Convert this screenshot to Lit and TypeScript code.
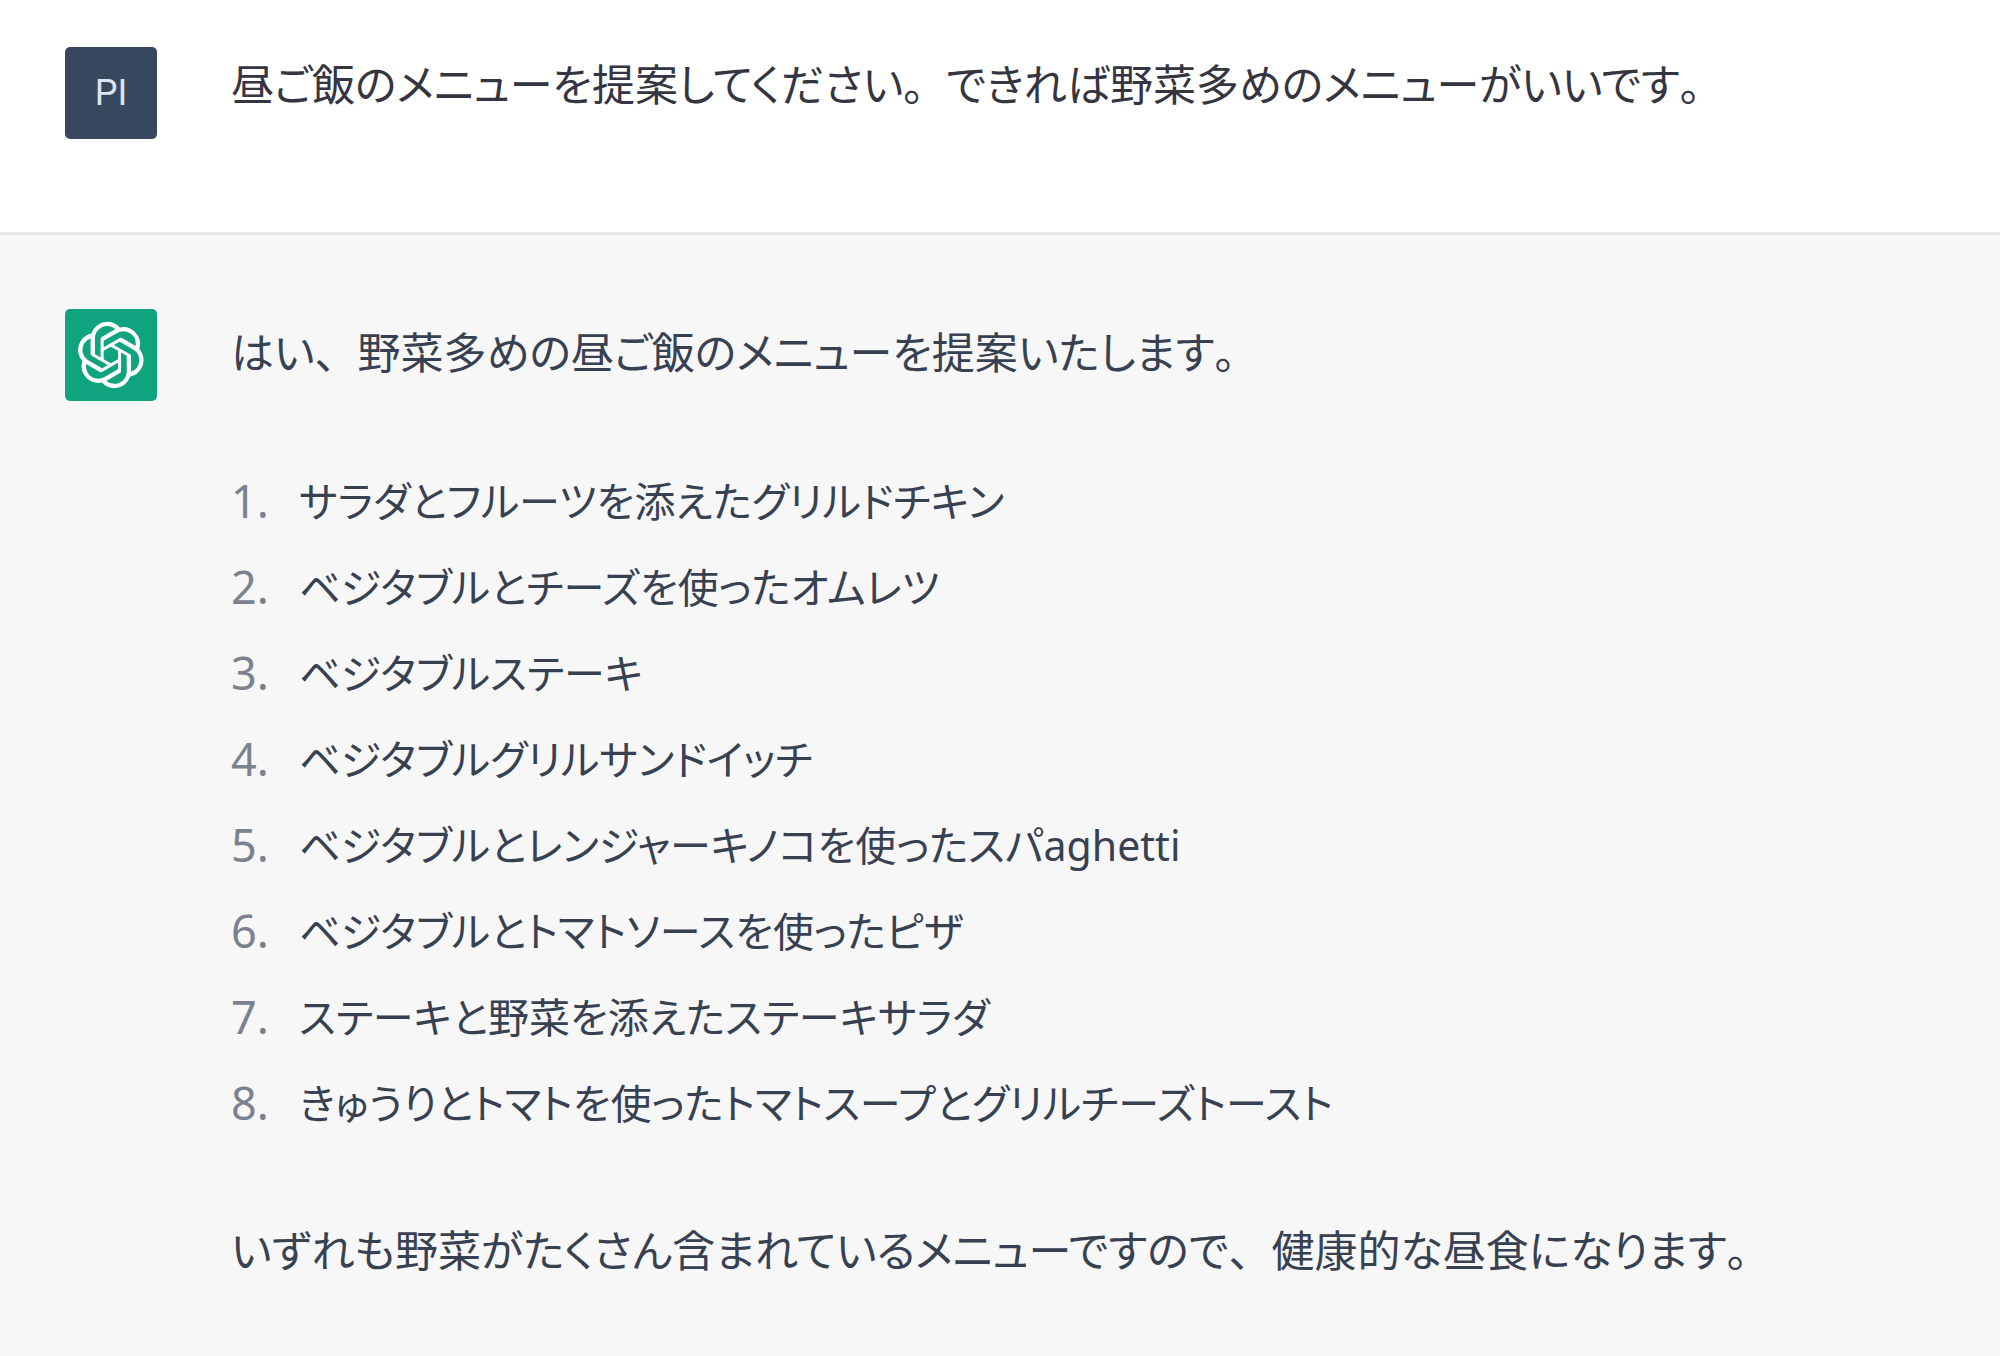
import { LitElement, html, css, svg } from "lit";
import { customElement } from "lit/decorators.js";

const MENU = [
  "サラダとフルーツを添えたグリルドチキン",
  "ベジタブルとチーズを使ったオムレツ",
  "ベジタブルステーキ",
  "ベジタブルグリルサンドイッチ",
  "ベジタブルとレンジャーキノコを使ったスパaghetti",
  "ベジタブルとトマトソースを使ったピザ",
  "ステーキと野菜を添えたステーキサラダ",
  "きゅうりとトマトを使ったトマトスープとグリルチーズトースト",
];

const knot = svg`<path fill="currentColor" d="M37.532 16.87a9.963 9.963 0 0 0-.856-8.184 10.078 10.078 0 0 0-10.855-4.835A9.964 9.964 0 0 0 18.306.5a10.079 10.079 0 0 0-9.614 6.977 9.967 9.967 0 0 0-6.664 4.834 10.08 10.08 0 0 0 1.24 11.817 9.965 9.965 0 0 0 .856 8.185 10.079 10.079 0 0 0 10.855 4.835 9.965 9.965 0 0 0 7.516 3.35 10.078 10.078 0 0 0 9.617-6.981 9.967 9.967 0 0 0 6.663-4.834 10.079 10.079 0 0 0-1.243-11.813zM22.498 37.886a7.474 7.474 0 0 1-4.799-1.735c.061-.033.168-.091.237-.134l7.964-4.6a1.294 1.294 0 0 0 .655-1.134V19.054l3.366 1.944a.12.12 0 0 1 .066.092v9.299a7.505 7.505 0 0 1-7.49 7.496zM6.392 31.006a7.471 7.471 0 0 1-.894-5.023c.06.036.162.099.237.141l7.964 4.6a1.297 1.297 0 0 0 1.308 0l9.724-5.614v3.888a.12.12 0 0 1-.048.103l-8.051 4.649a7.504 7.504 0 0 1-10.24-2.744zM4.297 13.62A7.469 7.469 0 0 1 8.2 10.333c0 .068-.004.19-.004.274v9.201a1.294 1.294 0 0 0 .654 1.132l9.723 5.614-3.366 1.944a.12.12 0 0 1-.114.01L7.04 23.856a7.504 7.504 0 0 1-2.743-10.237zm27.658 6.437l-9.724-5.615 3.367-1.943a.121.121 0 0 1 .113-.01l8.052 4.648a7.498 7.498 0 0 1-1.158 13.528v-9.476a1.293 1.293 0 0 0-.65-1.132zm3.35-5.043c-.059-.037-.162-.099-.236-.141l-7.965-4.6a1.298 1.298 0 0 0-1.308 0l-9.723 5.614v-3.888a.12.12 0 0 1 .048-.103l8.05-4.645a7.497 7.497 0 0 1 11.135 7.763zm-21.063 6.929l-3.367-1.944a.12.12 0 0 1-.065-.092v-9.299a7.497 7.497 0 0 1 12.293-5.756 6.94 6.94 0 0 0-.236.134l-7.965 4.6a1.294 1.294 0 0 0-.654 1.132l-.006 11.225zm1.829-3.943l4.33-2.501 4.332 2.5v5l-4.331 2.5-4.331-2.5V18z"/>`;

/** Sets 、 and 。 full width while the kana around them stay proportional. */
const prose = (text: string) =>
  text
    .split(/([、。])/)
    .filter((part) => part)
    .map((part) => (/[、。]/.test(part) ? html`<span class="stop">${part}</span>` : part));

@customElement("app-root")
export class AppRoot extends LitElement {
  static styles = css`
    :host {
      display: flex;
      flex-direction: column;
      min-height: 100vh;
      background: #f7f7f7;
      color: #343541;
      font-family: "Noto Sans", "Noto Sans CJK JP", sans-serif;
      font-size: 43px;
      line-height: 72px;
      font-feature-settings: "palt";
    }
    .message {
      display: flex;
      gap: 74px;
      padding: 47px 65px 93px;
      background: #ffffff;
    }
    .reply {
      flex: 1;
      padding: 74px 65px 64px;
      border-top: 3px solid #e5e5e5;
      background: #f7f7f7;
      color: #374151;
    }
    .avatar {
      flex: none;
      display: flex;
      align-items: center;
      justify-content: center;
      width: 92px;
      height: 92px;
      border-radius: 5px;
      background: #36475e;
      color: #dde3f0;
      font-family: Roboto, sans-serif;
      font-size: 36px;
    }
    .bot {
      background: #10a37f;
      color: #ffffff;
    }
    .logo {
      width: 68px;
      height: 68px;
    }
    .body {
      flex: 1;
      min-width: 0;
      display: flex;
      flex-direction: column;
      gap: 76px;
      padding-top: 2px;
    }
    .reply .body {
      padding-top: 8px;
    }
    p {
      margin: 0;
    }
    .stop {
      font-feature-settings: normal;
    }
    .menu {
      display: flex;
      flex-direction: column;
      gap: 14px;
      margin: 0;
      padding: 0;
      list-style: none;
      counter-reset: item;
      font-size: 41px;
    }
    .dish {
      display: flex;
      counter-increment: item;
    }
    .dish::before {
      content: counter(item) ".";
      flex: none;
      width: 68px;
      color: #7b818e;
      font-size: 45px;
    }
  `;

  render() {
    return html`
      <article class="message">
        <div class="avatar">PI</div>
        <div class="body">
          <p>${prose("昼ご飯のメニューを提案してください。できれば野菜多めのメニューがいいです。")}</p>
        </div>
      </article>
      <article class="message reply">
        <div class="avatar bot">
          <svg class="logo" viewBox="0 0 41 41" role="img" aria-label="ChatGPT">${knot}</svg>
        </div>
        <div class="body">
          <p>${prose("はい、野菜多めの昼ご飯のメニューを提案いたします。")}</p>
          <ol class="menu">
            ${MENU.map((dish) => html`<li class="dish">${dish}</li>`)}
          </ol>
          <p>${prose("いずれも野菜がたくさん含まれているメニューですので、健康的な昼食になります。")}</p>
        </div>
      </article>
    `;
  }
}
